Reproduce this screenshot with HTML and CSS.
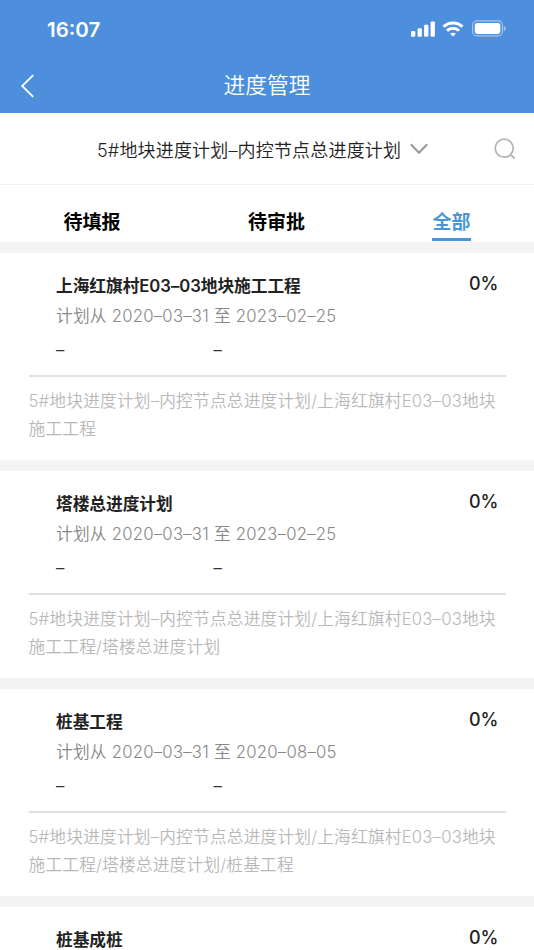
FILE: index.html
```html
<!DOCTYPE html>
<html lang="zh-CN">
<head>
<meta charset="utf-8">
<title>进度管理</title>
<link rel="stylesheet" href="styles.css">
</head>
<body>
<header class="header">
  <div class="status">
    <span class="time">16:07</span>
    <div class="indicators">
      <svg class="signal" width="24" height="16" viewBox="0 0 24 16" fill="#fff"><rect x="0" y="10" width="4.3" height="5.7" rx="1.2"/><rect x="6.6" y="7.2" width="4.3" height="8.5" rx="1.2"/><rect x="13.1" y="3.8" width="4.3" height="11.9" rx="1.2"/><rect x="19.6" y="0.4" width="4.3" height="15.3" rx="1.2"/></svg>
      <svg class="wifi" width="22" height="16" viewBox="0 0 22 16" fill="none" stroke="#fff" stroke-width="3"><path d="M1.5 5.8C6.8.6 15.2.6 20.5 5.8"/><path d="M5 9.6c3.4-3.2 8.6-3.2 12 0"/><path d="M8.2 12.7c1.6-1.4 4-1.4 5.6 0L11 15.6z" fill="#fff" stroke="none"/></svg>
      <svg class="battery" width="34" height="17" viewBox="0 0 34 17"><rect x=".6" y=".9" width="29.8" height="15" rx="4.2" fill="none" stroke="#fff" stroke-opacity=".5" stroke-width="1.1"/><rect x="2.8" y="3" width="25.5" height="10.9" rx="2.4" fill="#fff"/><path d="M31.8 6v5c2.4-.9 2.4-4.1 0-5" fill="#fff" fill-opacity=".55"/></svg>
    </div>
  </div>
  <div class="navbar">
    <svg class="back" width="15" height="24" viewBox="0 0 15 24" fill="none" stroke="#fff" stroke-width="1.8"><path d="M13.2 1.2 2.2 12l11 10.8"/></svg>
    <h1>进度管理</h1>
  </div>
</header>
<div class="selector">
  <span>5#地块进度计划–内控节点总进度计划</span>
  <svg class="chevron" width="18" height="12" viewBox="0 0 18 12" fill="none" stroke="#999" stroke-width="2"><path d="M.8 1.2 9 9.8l8.2-8.6"/></svg>
  <svg class="search" width="22" height="22" viewBox="0 0 22 22" fill="none" stroke="#b5b5b5" stroke-width="1.8"><circle cx="10.2" cy="10.2" r="9"/><path d="m16.5 16.5 4.2 4"/></svg>
</div>
<nav class="tabs">
  <div class="tab"><span>待填报</span></div>
  <div class="tab"><span>待审批</span></div>
  <div class="tab active"><span>全部</span></div>
</nav>
<main class="list">
  <article class="card">
    <div class="top"><h2>上海红旗村E03–03地块施工工程</h2><strong>0%</strong></div>
    <p class="date">计划从 2020–03–31 至 2023–02–25</p>
    <div class="actual"><span>–</span><span>–</span></div>
    <p class="path">5#地块进度计划–内控节点总进度计划/上海红旗村E03–03地块<br>施工工程</p>
  </article>
  <article class="card">
    <div class="top"><h2>塔楼总进度计划</h2><strong>0%</strong></div>
    <p class="date">计划从 2020–03–31 至 2023–02–25</p>
    <div class="actual"><span>–</span><span>–</span></div>
    <p class="path">5#地块进度计划–内控节点总进度计划/上海红旗村E03–03地块<br>施工工程/塔楼总进度计划</p>
  </article>
  <article class="card">
    <div class="top"><h2>桩基工程</h2><strong>0%</strong></div>
    <p class="date">计划从 2020–03–31 至 2020–08–05</p>
    <div class="actual"><span>–</span><span>–</span></div>
    <p class="path">5#地块进度计划–内控节点总进度计划/上海红旗村E03–03地块<br>施工工程/塔楼总进度计划/桩基工程</p>
  </article>
  <article class="card partial">
    <div class="top"><h2>桩基成桩</h2><strong>0%</strong></div>
  </article>
</main>
</body>
</html>
```
FILE: styles.css
```css
* { box-sizing: border-box; margin: 0; padding: 0; }
html, body { height: 950px; overflow: hidden; }
body { background: #f4f4f4; color: #222; font-family: Inter, "Noto Sans CJK SC", sans-serif; font-size: 16.7px; }
svg { display: block; flex: none; }
.header { height: 113px; background: #4d8fdd; color: #fff; }
.status { height: 57px; padding: 0 28px 0 47px; display: flex; justify-content: space-between; align-items: center; }
.time { font-size: 20.5px; font-weight: 600; line-height: 24px; margin-top: 2px; }
.indicators { display: flex; align-items: center; gap: 8px; }
.signal { margin-right: -1px; }
.navbar { height: 56px; display: grid; grid-template-columns: 40px 1fr 40px; align-items: center; }
.back { margin: 2px 0 0 20px; }
.navbar h1 { font-size: 21.7px; font-weight: 350; line-height: 30px; text-align: center; }
.selector { height: 72px; padding: 0 19px 0 97px; display: flex; align-items: center; background: #fff; border-bottom: 1px solid #f2f2f2; font-size: 18px; font-weight: 350; letter-spacing: .17px; white-space: nowrap; }
.chevron { margin-left: 9px; }
.search { margin-left: auto; margin-right: -1px; }
.tabs { height: 57px; padding-bottom: 1px; display: grid; grid-template-columns: 184px 185px 165px; background: #fff; color: #000; font-size: 19px; font-weight: 600; }
.tab { display: flex; justify-content: center; align-items: flex-end; }
.tab span { height: 36px; line-height: 35px; border-bottom: 3px solid transparent; }
.active { color: #4696d8; }
.active span { border-color: #4696d8; }
.list { padding-top: 10.5px; display: grid; gap: 10.5px; }
.card { height: 207.5px; padding: 20px 28.5px; background: #fff; }
.partial { height: 43px; padding-bottom: 0; overflow: hidden; }
.top { height: 26px; padding: 0 7px 0 27.5px; display: flex; justify-content: space-between; }
.top h2 { font-size: 16.7px; font-weight: 600; line-height: 26px; letter-spacing: -.03px; }
.top strong { font-size: 18px; font-weight: 500; line-height: 22px; }
.date { margin: 4px 0 0 27.5px; color: #888; line-height: 27px; font-weight: 350; letter-spacing: .24px; }
.actual { height: 47px; padding-left: 27.5px; border-bottom: 2px solid #e0e0e0; display: grid; grid-template-columns: 157.5px 1fr; line-height: 41px; color: #333; }
.path { padding-top: 10px; color: #b8b8b8; line-height: 28.3px; white-space: nowrap; font-weight: 350; letter-spacing: .2px; }
```
